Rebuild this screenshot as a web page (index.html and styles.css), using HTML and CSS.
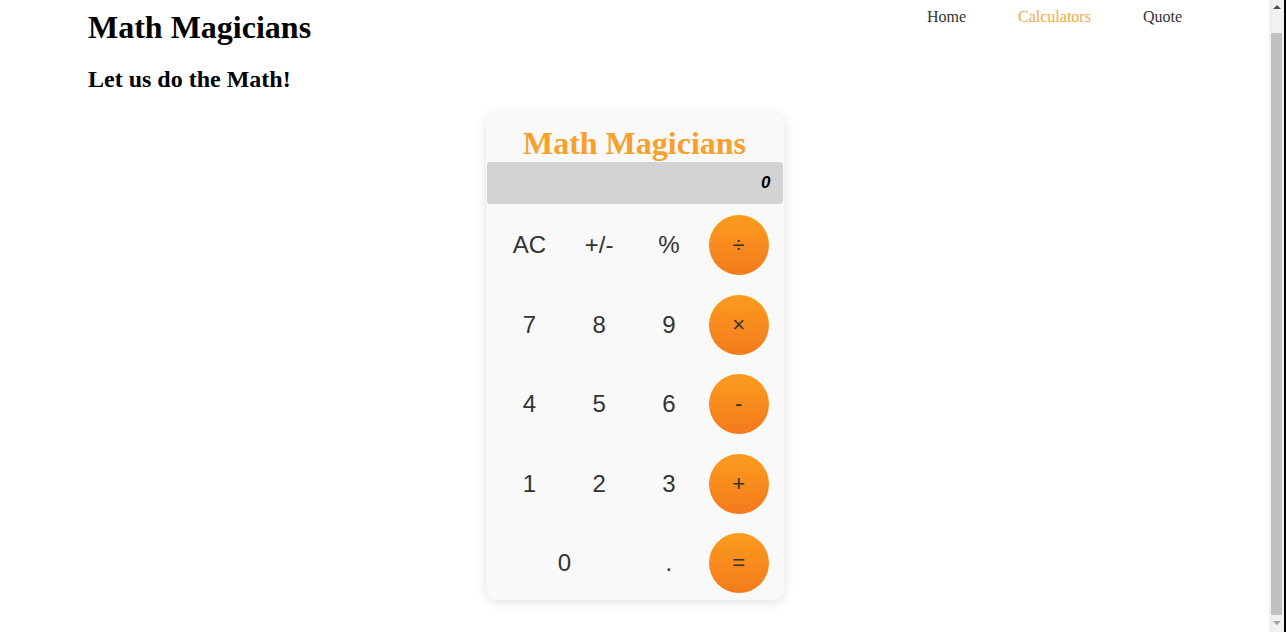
FILE: index.html
```html
<!DOCTYPE html>
<html lang="en">
<head>
<meta charset="utf-8">
<title>Math Magicians</title>
<link rel="stylesheet" href="styles.css">
</head>
<body>
<div class="page">
  <header class="header">
    <h1 class="logo">Math Magicians</h1>
    <nav>
      <ul class="nav">
        <li><a class="nav-link" href="#">Home</a></li>
        <li><a class="nav-link active" href="#">Calculators</a></li>
        <li><a class="nav-link" href="#">Quote</a></li>
      </ul>
    </nav>
  </header>
  <main class="main">
    <h2 class="tagline">Let us do the Math!</h2>
    <div class="calc-wrap">
      <div class="calc">
        <h2 class="calc-title">Math Magicians</h2>
        <div class="display">0</div>
        <div class="keys">
          <button class="key">AC</button>
          <button class="key">+/-</button>
          <button class="key">%</button>
          <button class="key op">÷</button>
          <button class="key">7</button>
          <button class="key">8</button>
          <button class="key">9</button>
          <button class="key op">×</button>
          <button class="key">4</button>
          <button class="key">5</button>
          <button class="key">6</button>
          <button class="key op">-</button>
          <button class="key">1</button>
          <button class="key">2</button>
          <button class="key">3</button>
          <button class="key op">+</button>
          <button class="key zero">0</button>
          <button class="key">.</button>
          <button class="key op">=</button>
        </div>
      </div>
    </div>
  </main>
</div>
<div class="scrollbar" aria-hidden="true">
  <div class="sb-track">
    <span class="sb-arrow sb-up"></span>
    <div class="sb-thumb"></div>
    <span class="sb-arrow sb-down"></span>
  </div>
  <div class="sb-edge"></div>
</div>
</body>
</html>
```
FILE: styles.css
```css
html {
  overflow: hidden;
  background: #fff;
}
html, body {
  margin: 0;
  padding: 0;
}
body {
  font-family: "Liberation Serif", "Times New Roman", serif;
  color: #000;
  padding-bottom: 30px;
}
.page {
  margin-right: 17px;
}
.header {
  display: flex;
  justify-content: space-between;
  align-items: flex-start;
  padding: 0 87px 0 88px;
}
.logo {
  margin: 9px 0 0;
  font-size: 32px;
  line-height: 37px;
  font-weight: bold;
}
.nav {
  list-style: none;
  display: flex;
  gap: 52px;
  margin: 8px 0 0;
  padding: 0;
}
.nav-link {
  font-size: 16px;
  line-height: 18px;
  color: #333;
  text-decoration: none;
}
.nav-link.active {
  color: #f5a742;
}
.main {
  padding: 0 88px;
}
.tagline {
  margin: 19px 0 0;
  font-size: 24px;
  line-height: 28px;
  font-weight: bold;
}
.calc-wrap {
  display: flex;
  justify-content: center;
  margin-top: 20px;
}
.calc {
  width: 298px;
  box-sizing: border-box;
  background: #f9f9f9;
  border-radius: 10px;
  box-shadow: 0 2px 12px rgba(0, 0, 0, 0.12);
  padding: 0 0 7px;
  margin-left: -175px;
  margin-right: -175px;
}
.calc-title {
  margin: 0;
  padding-top: 11px;
  text-align: center;
  font-size: 32px;
  line-height: 38px;
  font-weight: bold;
  color: #f7a02b;
}
.display {
  margin: 0 1px;
  height: 42px;
  line-height: 42px;
  background: #d3d3d3;
  border-radius: 3px;
  text-align: right;
  padding-right: 12px;
  font-family: "Liberation Sans", Arial, sans-serif;
  font-size: 17px;
  font-weight: bold;
  font-style: italic;
  color: #000;
}
.keys {
  display: grid;
  grid-template-columns: repeat(4, 60px);
  grid-auto-rows: 60px;
  column-gap: 9.7px;
  row-gap: 19.6px;
  padding: 11px 14px 0;
}
.key {
  border: none;
  border-radius: 30px;
  background: #f9f9f9;
  box-shadow: 0 0 6px rgba(0, 0, 0, 0.014);
  font-family: "Liberation Sans", Arial, sans-serif;
  font-size: 24px;
  color: #333;
  padding: 0;
}
.key.op {
  background: linear-gradient(180deg, #fb9c1d 0%, #f47a1c 100%);
  box-shadow: none;
  font-size: 22px;
}
.key.zero {
  grid-column: span 2;
}

/* fake browser scrollbar, overlaid at the right edge */
.scrollbar {
  position: fixed;
  top: 0;
  right: 0;
  bottom: 0;
  width: 17px;
  display: flex;
}
.sb-track {
  width: 15px;
  background: #f1f1f1;
  display: flex;
  flex-direction: column;
  align-items: center;
}
.sb-edge {
  width: 2px;
  background: #000;
}
.sb-arrow {
  width: 0;
  height: 0;
  border-left: 4px solid transparent;
  border-right: 4px solid transparent;
}
.sb-up {
  margin-top: 5px;
  border-bottom: 4px solid #505050;
}
.sb-down {
  margin-top: 6px;
  border-top: 4px solid #a3a3a3;
}
.sb-thumb {
  margin-top: 24px;
  width: 11px;
  height: 582px;
  background: #c1c1c1;
}
```
